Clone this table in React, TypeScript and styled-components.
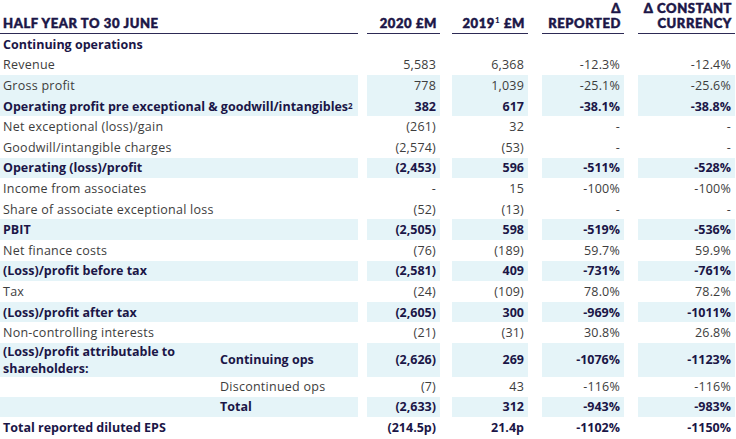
import styled, { createGlobalStyle } from 'styled-components'

const GlobalStyle = createGlobalStyle`
  html, body {
    margin: 0;
    padding: 0;
    background: #ffffff;
  }
  body {
    font-family: 'Open Sans', 'Liberation Sans', sans-serif;
  }
`

const COLS = '358px 82px 88px 96px 112px'
const GAPS = [9, 12, 14, 14]
const SHADE = '#e5f4f8'
const NAVY = '#1b1647'

const Table = styled.div`
  width: 736px;
  display: flex;
  flex-direction: column;
`

const HeadRow = styled.div`
  display: grid;
  grid-template-columns: ${COLS};
  height: 34px;
`

const HeadCell = styled.div<{ $gap?: number; $right?: boolean }>`
  margin-left: ${p => p.$gap || 0}px;
  margin-right: ${p => (p.$right ? 1 : 0)}px;
  border-bottom: 1px solid #2d2a55;
  display: flex;
  flex-direction: column;
  justify-content: flex-end;
  align-items: ${p => (p.$gap ? 'flex-end' : 'flex-start')};
  padding: 0 ${p => (p.$gap ? 3 : 0)}px 2px ${p => (p.$gap ? 0 : 3)}px;
  font-family: Lato, 'Liberation Sans', sans-serif;
  font-weight: 900;
  font-size: 13px;
  line-height: 15px;
  letter-spacing: 0.6px;
  -webkit-text-stroke: 0.5px ${NAVY};
  color: ${NAVY};
  text-align: right;
  white-space: nowrap;

  sup {
    font-size: 8px;
    line-height: 0;
    vertical-align: 5px;
    -webkit-text-stroke: 0;
  }
`

const Row = styled.div<{ $tall?: boolean }>`
  display: grid;
  grid-template-columns: ${COLS};
  height: ${p => (p.$tall ? 33 : 20.6)}px;
`

const Label = styled.div<{ $shade?: boolean; $bold?: boolean }>`
  background: ${p => (p.$shade ? SHADE : 'transparent')};
  display: flex;
  align-items: center;
  padding-left: 3px;
  font-size: 12.5px;
  font-weight: ${p => (p.$bold ? 700 : 400)};
  letter-spacing: ${p => (p.$bold ? 0 : 0.25)}px;
  color: ${p => (p.$bold ? NAVY : '#3d3d3d')};
  white-space: nowrap;

  sup {
    font-size: 8px;
    line-height: 0;
    vertical-align: 5px;
  }
`

const SplitLabel = styled(Label)`
  display: grid;
  grid-template-columns: 217px 1fr;
  align-items: center;
`

const Stacked = styled.span`
  line-height: 12px;
  white-space: normal;
`

const Value = styled.div<{ $gap: number; $shade?: boolean; $bold?: boolean; $right?: boolean }>`
  margin-left: ${p => p.$gap}px;
  margin-right: ${p => (p.$right ? 1 : 0)}px;
  background: ${p => (p.$shade ? SHADE : 'transparent')};
  display: flex;
  align-items: center;
  justify-content: flex-end;
  padding-right: 4px;
  font-size: 12.5px;
  font-weight: ${p => (p.$bold ? 700 : 400)};
  letter-spacing: ${p => (p.$bold ? 0 : 0.2)}px;
  color: ${p => (p.$bold ? NAVY : '#3d3d3d')};
  white-space: nowrap;
`

type Line = {
  label: React.ReactNode
  sub?: string
  values?: string[]
  shade?: boolean
  bold?: boolean
  tall?: boolean
}

const lines: Line[] = [
  { label: 'Continuing operations', bold: true },
  { label: 'Revenue', values: ['5,583', '6,368', '-12.3%', '-12.4%'] },
  { label: 'Gross profit', values: ['778', '1,039', '-25.1%', '-25.6%'], shade: true },
  {
    label: (
      <>
        Operating profit pre exceptional &amp; goodwill/intangibles<sup>2</sup>
      </>
    ),
    values: ['382', '617', '-38.1%', '-38.8%'],
    shade: true,
    bold: true,
  },
  { label: 'Net exceptional (loss)/gain', values: ['(261)', '32', '-', '-'] },
  { label: 'Goodwill/intangible charges', values: ['(2,574)', '(53)', '-', '-'] },
  { label: 'Operating (loss)/profit', values: ['(2,453)', '596', '-511%', '-528%'], shade: true, bold: true },
  { label: 'Income from associates', values: ['-', '15', '-100%', '-100%'] },
  { label: 'Share of associate exceptional loss', values: ['(52)', '(13)', '-', '-'] },
  { label: 'PBIT', values: ['(2,505)', '598', '-519%', '-536%'], shade: true, bold: true },
  { label: 'Net finance costs', values: ['(76)', '(189)', '59.7%', '59.9%'] },
  { label: '(Loss)/profit before tax', values: ['(2,581)', '409', '-731%', '-761%'], shade: true, bold: true },
  { label: 'Tax', values: ['(24)', '(109)', '78.0%', '78.2%'] },
  { label: '(Loss)/profit after tax', values: ['(2,605)', '300', '-969%', '-1011%'], shade: true, bold: true },
  { label: 'Non-controlling interests', values: ['(21)', '(31)', '30.8%', '26.8%'] },
  {
    label: (
      <Stacked>
        (Loss)/profit attributable to
        <br />
        shareholders:
      </Stacked>
    ),
    sub: 'Continuing ops',
    values: ['(2,626)', '269', '-1076%', '-1123%'],
    shade: true,
    bold: true,
    tall: true,
  },
  { label: '', sub: 'Discontinued ops', values: ['(7)', '43', '-116%', '-116%'] },
  { label: '', sub: 'Total', values: ['(2,633)', '312', '-943%', '-983%'], shade: true, bold: true },
  { label: 'Total reported diluted EPS', values: ['(214.5p)', '21.4p', '-1102%', '-1150%'], bold: true },
]

const App = () => {
  return (
    <>
      <GlobalStyle />
      <Table>
        <HeadRow>
          <HeadCell>HALF YEAR TO 30 JUNE</HeadCell>
          <HeadCell $gap={GAPS[0]}>2020 £M</HeadCell>
          <HeadCell $gap={GAPS[1]}>
            <span>
              2019<sup>1</sup> £M
            </span>
          </HeadCell>
          <HeadCell $gap={GAPS[2]}>
            <span>Δ</span>
            <span>REPORTED</span>
          </HeadCell>
          <HeadCell $gap={GAPS[3]} $right>
            <span>Δ CONSTANT</span>
            <span>CURRENCY</span>
          </HeadCell>
        </HeadRow>
        {lines.map((line, i) => {
          const vals = line.values || ['', '', '', '']
          return (
            <Row key={i} $tall={line.tall}>
              {line.sub !== undefined ? (
                <SplitLabel $shade={line.shade} $bold={line.bold}>
                  <span>{line.label}</span>
                  <span>{line.sub}</span>
                </SplitLabel>
              ) : (
                <Label $shade={line.shade} $bold={line.bold}>
                  {line.label}
                </Label>
              )}
              {vals.map((v, j) => (
                <Value key={j} $gap={GAPS[j]} $shade={line.shade} $bold={line.bold} $right={j === 3}>
                  {v}
                </Value>
              ))}
            </Row>
          )
        })}
      </Table>
    </>
  )
}

export default App
